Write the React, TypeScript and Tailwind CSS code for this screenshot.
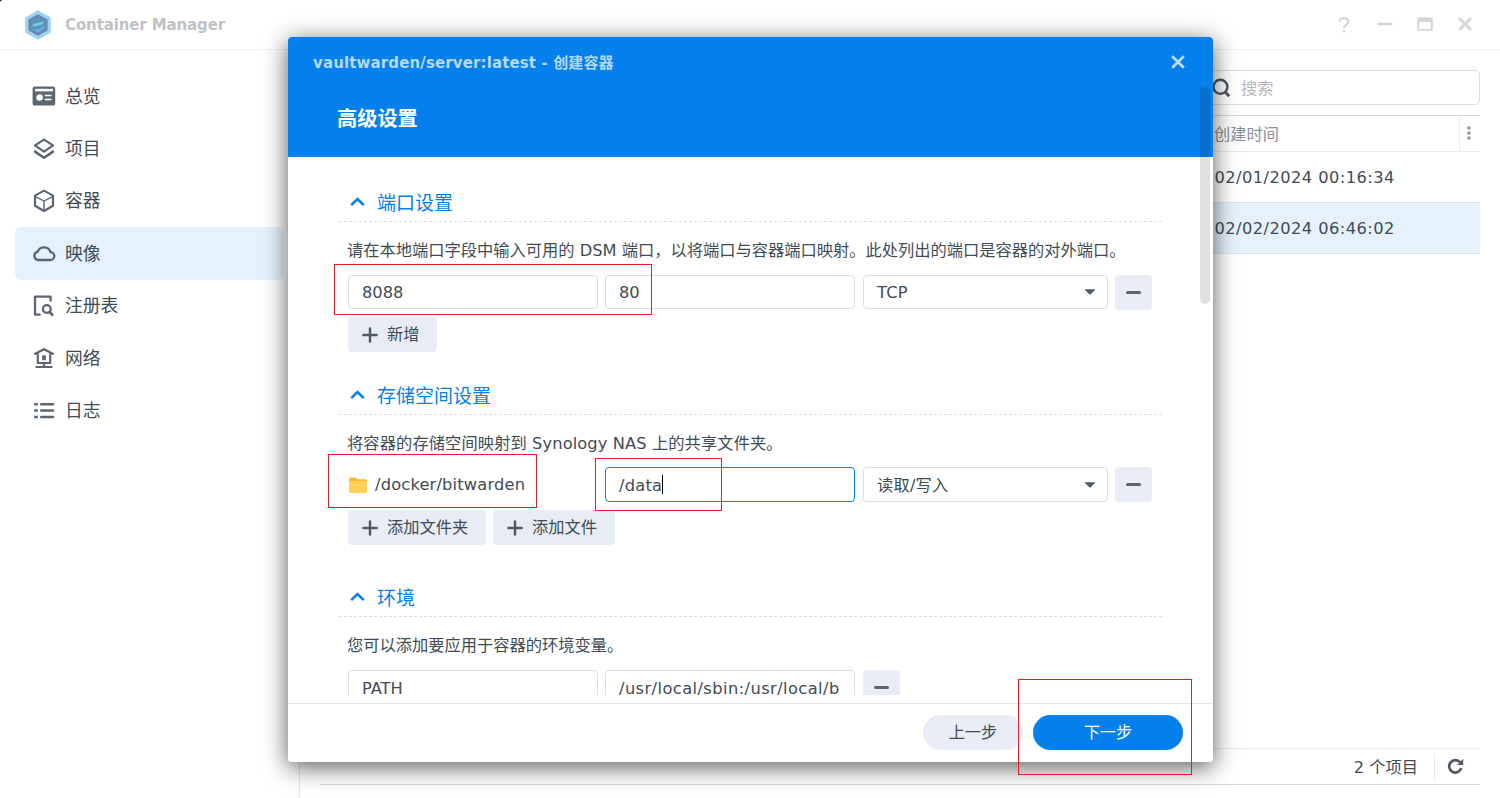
import React from 'react';

const iconColor = '#5b6670';

const OverviewIcon = () => (
  <svg width="24" height="24" viewBox="0 0 24 24">
    <rect x="0.6" y="2.6" width="22.6" height="19" rx="2.2" fill={iconColor} />
    <rect x="3" y="4.8" width="18" height="2.6" fill="#fff" />
    <circle cx="7.6" cy="13.5" r="3.3" fill="#fff" />
    <path d="M13.4 11.600h5.6M13.4 15.400h5.6" stroke="#fff" strokeWidth="1.5" strokeLinecap="round" />
  </svg>
);

const ProjectIcon = () => (
  <svg width="24" height="24" viewBox="0 0 24 24" fill="none" stroke={iconColor} strokeWidth="2.2" strokeLinejoin="round" strokeLinecap="round">
    <path d="M12 2.6 21 8.4 12 14.6 3 8.4Z" />
    <path d="M3 14.6 12 20.8l9-6.200" strokeWidth="2.6" />
  </svg>
);

const ContainerIcon = () => (
  <svg width="24" height="24" viewBox="0 0 24 24" fill="none" stroke={iconColor} strokeWidth="2.2" strokeLinejoin="round">
    <path d="M12 1.600 21 6.600v10.200L12 22 3 16.800V6.600Z" />
    <path d="M4 7.800l8 4.200 8-4.200M12 12v9" strokeWidth="1.4" />
  </svg>
);

const ImageIcon = () => (
  <svg width="24" height="24" viewBox="0 0 24 24" fill="none" stroke={iconColor} strokeWidth="2.3" strokeLinejoin="round">
    <path d="M6 19h12.200a3.900 3.900 0 0 0 .4-7.800A6.900 6.900 0 0 0 5.700 10.600 4.300 4.300 0 0 0 6 19Z" />
  </svg>
);

const RegistryIcon = () => (
  <svg width="24" height="24" viewBox="0 0 24 24" fill="none" stroke={iconColor} strokeWidth="2.3">
    <path d="M8.600 20.600H3V2.600h15.600v5" strokeLinejoin="round" />
    <circle cx="14.800" cy="15" r="3.900" />
    <path d="m17.600 18 2.800 2.800" strokeWidth="2.6" strokeLinecap="round" />
  </svg>
);

const NetworkIcon = () => (
  <svg width="24" height="24" viewBox="0 0 24 24" fill="none" stroke={iconColor} strokeWidth="2.2" strokeLinecap="round" strokeLinejoin="round">
    <path d="M3.200 7.800 12 3.200l8.800 4.600" strokeWidth="2.4" />
    <path d="M5.800 8v9h12.400V8" />
    <path d="M12 9.400v4.800" strokeWidth="3.8" strokeLinecap="butt" />
    <path d="M12 17v4M4.400 21h15.200" strokeWidth="2.2" />
  </svg>
);

const LogIcon = () => (
  <svg width="24" height="24" viewBox="0 0 24 24" fill="none" stroke={iconColor} strokeWidth="2.5">
    <path d="M2.2 5.200h3.600M2.2 11.600h3.600M2.2 18h3.600" />
    <path d="M9.200 5.200h11.800M9.200 11.600h11.800M9.200 18h11.800" strokeLinecap="round" />
  </svg>
);

const Plus = () => (
  <svg width="16" height="16" viewBox="0 0 16 16" stroke="#505a64" strokeWidth="2.5" strokeLinecap="round">
    <path d="M1.4 8h13.200M8 1.4v13.200" />
  </svg>
);

const menu = [
  { label: '总览', icon: <OverviewIcon /> },
  { label: '项目', icon: <ProjectIcon /> },
  { label: '容器', icon: <ContainerIcon /> },
  { label: '映像', icon: <ImageIcon />, active: true },
  { label: '注册表', icon: <RegistryIcon /> },
  { label: '网络', icon: <NetworkIcon /> },
  { label: '日志', icon: <LogIcon /> },
];

function SectionTitle({ children }: { children: React.ReactNode }) {
  return (
    <div className="h-[39px] shrink-0 flex items-center relative text-[#057feb] text-[19px] pl-[12px]">
      <svg className="mb-px" width="15" height="10" viewBox="0 0 15 10" fill="none" stroke="#057feb" strokeWidth="2.5">
        <path d="M1.200 8.200 7.500 2 13.800 8.200" />
      </svg>
      <span className="ml-[12px]">{children}</span>
      <svg className="absolute left-0 bottom-0" width="825" height="1">
        <path d="M0 .5h825" stroke="#d5dfe9" strokeDasharray="3 2" strokeDashoffset="4" />
      </svg>
    </div>
  );
}

function Desc({ children }: { children: React.ReactNode }) {
  return <p className="h-[53px] shrink-0 flex items-center pt-[4px] pl-[9px] whitespace-pre">{children}</p>;
}

function Field({ children, focus }: { children: React.ReactNode; focus?: boolean }) {
  return (
    <div className={`w-[250px] h-full rounded-[4px] border pl-[13px] pt-[2px] flex items-center ${focus ? 'border-[#057feb]' : 'border-[#d5dfe9]'}`}>
      {children}
    </div>
  );
}

function Select({ children }: { children: React.ReactNode }) {
  return (
    <div className="w-[245px] h-full rounded-[4px] border border-[#d5dfe9] pl-[13px] pr-[11px] flex items-center justify-between ml-px">
      <span className="pt-[2px] tracking-[0.2px]">{children}</span>
      <svg width="12" height="6" viewBox="0 0 11 6" fill="#505a64">
        <path d="M.8.3h9.4c.4 0 .6.5.3.8L6.2 5.3a1 1 0 0 1-1.4 0L.5 1.1C.2.8.4.3.8.3Z" />
      </svg>
    </div>
  );
}

function MinusButton() {
  return (
    <button className="w-[37px] h-[35px] pb-px bg-[#e8edf5] rounded-[4px] flex items-center justify-center">
      <span className="w-[15px] h-[3px] rounded-full bg-[#5b656f]" />
    </button>
  );
}

function AddButton({ children, className }: { children: React.ReactNode; className: string }) {
  return (
    <button className={`h-[35px] bg-[#e8edf5] rounded-[4px] flex items-center pl-[14px] gap-[9px] ${className}`}>
      <Plus />
      <span className="pt-px">{children}</span>
    </button>
  );
}

function TopBar() {
  return (
    <header className="h-[50px] shrink-0 border-b border-[#f0f1f3] flex items-center pl-[24px] pr-[28px]">
      <svg width="28" height="30" viewBox="0 0 28 30">
        <path d="M14 1.2 26 8v14L14 28.8 2 22V8Z" fill="#9fd2f5" stroke="#9fd2f5" strokeWidth="1.6" strokeLinejoin="round" />
        <path d="M14 4.2 23.600 9.600v10.800L14 25.800 4.400 20.400V9.600Z" fill="#668aae" />
        <path d="M14 6.600 21.400 10.800v8.400L14 23.400 6.600 19.200v-8.400Z" fill="#5b93bd" />
        <path d="M7.600 16.500c1.500-3 5.500-3.500 12.400-5-.8 3-4.500 4-8.200 4.600Z" fill="#78cfd8" />
        <path d="M8.400 19.400c4 .8 8-.4 11.400-3.600v3l-5.800 3.600Z" fill="#6aaee0" />
      </svg>
      <h1 className="ml-[13px] pt-px text-[15px] font-bold text-[#bfc1c5] tracking-[-0.12px]">Container Manager</h1>
      <div className="ml-auto flex items-center gap-[26px]">
        <svg className="mr-px" width="12" height="16" viewBox="0 0 12 16" fill="none" stroke="#d4d6da" strokeWidth="2.200">
          <path d="M1.600 4.800C1.800 2.600 3.600 1.200 6 1.200s4.400 1.400 4.400 3.600c0 2.800-4.300 3-4.300 6.200" />
          <path d="M6.100 12.800v2.600" strokeWidth="2.600" />
        </svg>
        <svg className="mb-[2px]" width="16" height="16" viewBox="0 0 16 16" stroke="#d4d6da" strokeWidth="2.4" strokeLinecap="round">
          <path d="M1.6 8h12.8" />
        </svg>
        <svg className="-ml-[2px] mb-[2px]" width="16" height="14" viewBox="0 0 16 14">
          <path fillRule="evenodd" fill="#d4d6da" d="M1.5.5h13a1.3 1.3 0 0 1 1.3 1.3v10.6a1.3 1.3 0 0 1-1.3 1.3h-13A1.3 1.3 0 0 1 .2 12.4V1.8A1.3 1.3 0 0 1 1.500.5ZM2.200 5v6.900h11.600V5Z" />
        </svg>
        <svg className="-mr-px -ml-[2px] mb-[2px]" width="16" height="16" viewBox="0 0 16 16" stroke="#d4d6da" strokeWidth="2.7">
          <path d="m2 2 12 12M14 2 2 14" />
        </svg>
      </div>
    </header>
  );
}

function Sidebar() {
  return (
    <nav className="w-[300px] shrink-0 border-r border-[#e3e7eb] pt-[20px] pl-[15px] pr-[15px] text-[17.8px]">
      {menu.map((item) => (
        <div
          key={item.label}
          className={`w-[269px] h-[52.4px] rounded-[6px] flex items-center pl-[17px] ${item.active ? 'bg-[#e5f1fd]' : ''}`}
        >
          {item.icon}
          <span className="ml-[9px] pt-px">{item.label}</span>
        </div>
      ))}
    </nav>
  );
}

function ImageList() {
  return (
    <main className="flex-1 flex flex-col pl-[20px] pr-[20px] pt-[20px]">
      <div className="w-[275px] h-[35px] self-end rounded-[5px] border border-[#d5dfe9] flex items-center pl-[5px]">
        <svg width="20" height="20" viewBox="0 0 20 20" fill="none" stroke="#4a5560" strokeWidth="2.4">
          <circle cx="9.400" cy="8.800" r="7" />
          <path d="m14.200 14 4 4.200" strokeWidth="2.800" />
        </svg>
        <span className="ml-[10px] pt-[2px] text-[#b3b7bc]">搜索</span>
      </div>

      <div className="mt-[10px] h-[37px] shrink-0 border-t border-t-[#d0dce6] border-b border-b-[#e8ecf0] flex text-[#8b9199]">
        <div className="flex-1 flex justify-end">
          <span className="w-[245px] pt-[2px] flex items-center">创建时间</span>
        </div>
        <div className="w-[21px] border-l border-[#e8ecf0] flex items-center pl-[7px] pb-px">
          <svg width="4" height="14" viewBox="0 0 4 14" fill="#8b9199">
            <path d="M.5.500h3v3h-3zM.5 5.500h3v3h-3zM.5 10.500h3v3h-3z" />
          </svg>
        </div>
      </div>
      <div className="h-[50px] pt-[2px] shrink-0 flex items-center justify-end tracking-[0.45px]">
        <span className="w-[265.5px]">02/01/2024 00:16:34</span>
      </div>
      <div className="h-[52px] pt-[2px] shrink-0 flex items-center justify-end tracking-[0.45px] bg-[#e5f1fd] border-y border-[#d8e5f0]">
        <span className="w-[265.5px]">02/02/2024 06:46:02</span>
      </div>

      <div className="mt-auto mb-[13px] h-[37px] shrink-0 border-t border-t-[#e3edf5] border-b border-b-[#d0dce6] flex items-center justify-end">
        <span className="pt-[3px]">2 个项目</span>
        <div className="ml-[16px] h-[25px] border-l border-[#e3e8ee] pl-[12px] w-[46px] flex items-center">
          <svg width="17" height="17" viewBox="0 0 17 17" fill="none" stroke="#505a64" strokeWidth="2.700">
            <path d="M13.200 4.400A6.200 6.200 0 1 0 14.300 10.200" />
            <path d="M16.200.8V7H10Z" fill="#505a64" stroke="none" />
          </svg>
        </div>
      </div>
    </main>
  );
}

function CreateDialog() {
  return (
    <div className="absolute left-[288px] top-[37px] w-[925px] h-[725px] rounded-[4px] bg-white overflow-hidden flex flex-col">
      <div className="h-[120px] shrink-0 bg-[#057feb]">
        <div className="h-[50px] flex items-center justify-between pl-[25px] pr-[28px]">
          <h2 className="pt-[2px] text-[15px] font-bold text-[#b4d9f9] tracking-[0.13px]">vaultwarden/server:latest - 创建容器</h2>
          <svg width="14" height="14" viewBox="0 0 14 14" stroke="#c0def9" strokeWidth="2.700">
            <path d="m1.200 1.200 11.600 11.600M12.800 1.200 1.200 12.800" />
          </svg>
        </div>
        <h3 className="pl-[49px] pt-[17px] text-[20.2px] leading-[30px] font-bold text-white">高级设置</h3>
      </div>

      {/* scrolling body */}
      <div className="h-[538px] shrink-0 overflow-hidden flex flex-col pl-[50px] pt-[26px]">
        <SectionTitle>端口设置</SectionTitle>
        <Desc>请在本地端口字段中输入可用的 DSM 端口，以将端口与容器端口映射。此处列出的端口是容器的对外端口。</Desc>
        <div className="h-[35px] shrink-0 flex gap-[7px] pl-[10px]">
          <div className="h-[34px]"><Field>8088</Field></div>
          <div className="h-[34px]"><Field>80</Field></div>
          <div className="h-[34px]"><Select>TCP</Select></div>
          <MinusButton />
        </div>
        <div className="mt-[7px] pl-[10px] flex">
          <AddButton className="w-[89px]">新增</AddButton>
        </div>

        <div className="h-[24px] shrink-0" />
        <SectionTitle>存储空间设置</SectionTitle>
        <Desc><span className="tracking-[0.1px]">将容器的存储空间映射到 Synology NAS 上的共享文件夹。</span></Desc>
        <div className="-mt-px h-[35px] shrink-0 flex gap-[7px] pl-[10px]">
          <div className="w-[250px] flex items-center">
            <svg width="20" height="18" viewBox="0 0 20 18">
              <path d="M1 3.200C1 2 1.600 1.400 2.600 1.400h5l1.800 1.800h8.200c1 0 1.400.6 1.400 1.400V9H1Z" fill="#fdb92b" />
              <rect x="1" y="5" width="18" height="12" rx="1.400" fill="#ffd159" />
            </svg>
            <span className="ml-[7px] pt-px tracking-[0.18px]">/docker/bitwarden</span>
          </div>
          <Field focus>
            <span className="tracking-[0.25px]">/data</span>
            <span className="w-px h-[19px] mb-[2px] bg-black" />
          </Field>
          <Select>读取/写入</Select>
          <MinusButton />
        </div>
        <div className="mt-[8px] pl-[10px] flex gap-[7px]">
          <AddButton className="w-[138px]">添加文件夹</AddButton>
          <AddButton className="w-[122px]">添加文件</AddButton>
        </div>

        <div className="h-[33px] shrink-0" />
        <SectionTitle>环境</SectionTitle>
        <Desc>您可以添加要应用于容器的环境变量。</Desc>
        <div className="h-[35px] shrink-0 flex gap-[7px] pl-[10px]">
          <Field>PATH</Field>
          <Field><span className="tracking-[0.42px]">/usr/local/sbin:/usr/local/b</span></Field>
          <div className="ml-px"><MinusButton /></div>
        </div>
      </div>

      <footer className="mt-[8px] h-[59px] shrink-0 border-t border-[#dfe6ec] flex items-start justify-end gap-[10px] pt-[11px] pr-[30px]">
        <button className="w-[100px] h-[35px] pt-px rounded-full bg-[#e8edf5]">上一步</button>
        <button className="w-[150px] h-[35px] pt-px rounded-full bg-[#057feb] text-white">下一步</button>
      </footer>

      <div className="absolute right-[3px] top-[50px] w-[10px] h-[217px] rounded-full bg-black/12" />
    </div>
  );
}

export default function App() {
  return (
    <div className="relative w-[1500px] h-[798px] overflow-hidden bg-[#10101c] text-[#414b55] text-[16.25px] leading-[22px] font-['DejaVu_Sans','Noto_Sans_CJK_SC',sans-serif]">
      <div className="h-full bg-white rounded-tl-[3px] flex flex-col">
        <TopBar />
        <div className="flex-1 flex">
          <Sidebar />
          <ImageList />
        </div>
      </div>

      <div className="absolute left-[288px] top-[37px] w-[925px] h-[725px] rounded-[4px] shadow-[0_5px_25px_rgba(0,0,0,0.65)]" />
      <CreateDialog />

      {/* highlight boxes */}
      <div className="absolute left-[334px] top-[264px] w-[318px] h-[51px] border border-[#ed1c24]" />
      <div className="absolute left-[328px] top-[454px] w-[209px] h-[54px] border border-[#ed1c24]" />
      <div className="absolute left-[595px] top-[458px] w-[127px] h-[53px] border border-[#ed1c24]" />
      <div className="absolute left-[1018px] top-[679px] w-[174px] h-[96px] border border-[#ed1c24]" />
    </div>
  );
}
